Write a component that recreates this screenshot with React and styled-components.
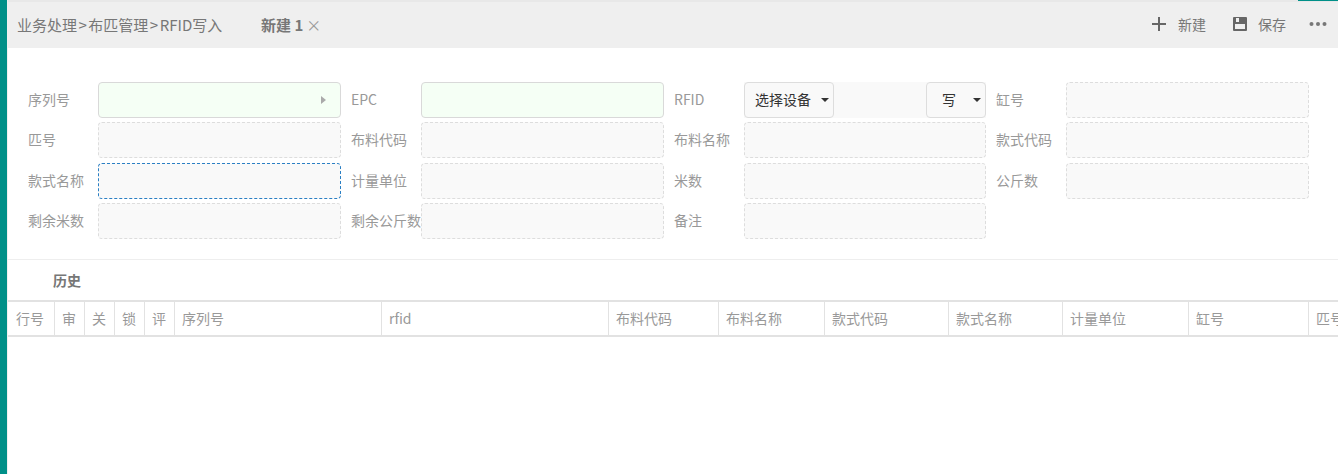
import React from "react";
import styled, { createGlobalStyle } from "styled-components";

const GlobalStyle = createGlobalStyle`
  html, body { margin: 0; padding: 0; height: 100%; background: #fff; overflow: hidden; }
  body { font-family: "Noto Sans CJK SC", "Liberation Sans", sans-serif; font-size: 14px; }
  * { box-sizing: border-box; }
`;

const Page = styled.div`
  display: flex;
  width: 1338px;
  height: 474px;
  overflow: hidden;
`;

const Sidebar = styled.div`
  flex: 0 0 7px;
  background: #009088;
`;

const Main = styled.div`
  flex: 1;
  min-width: 0;
  border-left: 1px solid #f0f0f0;
`;

const TopLine = styled.div`
  display: flex;
  justify-content: flex-end;
  height: 2px;
  background: #e8e8e8;
`;

const TopAccent = styled.div`
  width: 40px;
  height: 1px;
  background: #009088;
`;

const Header = styled.div`
  display: flex;
  align-items: center;
  height: 46px;
  padding: 0 11px 2px 9px;
  background: #efefef;
  color: #777;
`;

const Crumbs = styled.div`
  font-size: 15px;
  width: 244px;
  white-space: nowrap;
`;

const Sep = styled.span`
  padding: 0 1.5px;
`;

const Tab = styled.div`
  font-weight: 700;
  font-size: 15px;
  color: #777;
`;

const TabClose = styled.span`
  margin-left: 3px;
  font-weight: 400;
  font-size: 15px;
  color: #999;
`;

const Actions = styled.div`
  display: flex;
  align-items: center;
  margin-left: auto;
  font-size: 14px;
`;

const Action = styled.div`
  display: flex;
  align-items: center;
  gap: ${(p) => p.$iconGap}px;
  margin-right: ${(p) => p.$gap}px;
`;

const Form = styled.div`
  display: grid;
  grid-template-columns: 70px 243px 80px 243px 80px 242px 80px 243px;
  row-gap: 4.33px;
  grid-auto-rows: 36px;
  padding: 34px 0 20px 20px;
  border-bottom: 1px solid #eee;
`;

const Label = styled.div`
  display: flex;
  align-items: center;
  padding-left: ${(p) => (p.$first ? 0 : 10)}px;
  padding-bottom: 2px;
  font-size: 14px;
  white-space: nowrap;
  color: #999;
`;

const Field = styled.div`
  display: flex;
  align-items: center;
  justify-content: flex-end;
  height: 36px;
  padding-right: 14px;
  border: 1px ${(p) => (p.$required ? "solid #d9d9d9" : p.$focus ? "dashed #2a7fc4" : "dashed #ddd")};
  border-radius: 4px;
  background: ${(p) => (p.$required ? "#f5fff5" : "#f9f9f9")};
`;

const Arrow = styled.span`
  width: 0;
  height: 0;
  border-left: 5px solid #aaa;
  border-top: 4px solid transparent;
  border-bottom: 4px solid transparent;
`;

const RfidGroup = styled.div`
  display: flex;
  justify-content: space-between;
  height: 36px;
  background: #f9f9f9;
`;

const Select = styled.div`
  display: flex;
  align-items: center;
  justify-content: space-between;
  width: ${(p) => p.$w}px;
  padding: 0 4px 2px ${(p) => p.$pad}px;
  border: 1px solid #ddd;
  border-radius: 4px;
  background: #f9f9f9;
  color: #333;
  font-size: 14px;
`;

const Caret = styled.span`
  width: 0;
  height: 0;
  margin-top: 2px;
  border-top: 4px solid #333;
  border-left: 4.5px solid transparent;
  border-right: 4.5px solid transparent;
`;

const Section = styled.div`
  display: flex;
  align-items: center;
  height: 40px;
  padding-left: 45px;
  padding-bottom: 0;
  font-weight: 700;
  font-size: 14px;
  color: #777;
`;

const TableHead = styled.div`
  display: flex;
  height: 37px;
  border-top: 2px solid #e2e2e2;
  border-bottom: 2px solid #e2e2e2;
  overflow: hidden;
`;

const Cell = styled.div`
  flex: 0 0 ${(p) => p.$w}px;
  display: flex;
  align-items: center;
  padding: 0 0 1px 7px;
  border-right: 1px solid #e2e2e2;
  color: #999;
  font-size: 14px;
  white-space: nowrap;
  &:first-child { padding-left: 8px; }
  &:last-child { border-right: 0; }
`;

const rows = [
  [["序列号", "req-arrow"], ["EPC", "req"], ["RFID", "rfid"], ["缸号", ""]],
  [["匹号", ""], ["布料代码", ""], ["布料名称", ""], ["款式代码", ""]],
  [["款式名称", "focus"], ["计量单位", ""], ["米数", ""], ["公斤数", ""]],
  [["剩余米数", ""], ["剩余公斤数", ""], ["备注", ""]],
];

const columns = [
  ["行号", 47], ["审", 30], ["关", 30], ["锁", 30], ["评", 30], ["序列号", 207], ["rfid", 227],
  ["布料代码", 110], ["布料名称", 106], ["款式代码", 124], ["款式名称", 114], ["计量单位", 126],
  ["缸号", 120], ["匹号", 60],
];

function FormItem({ label, kind, first }) {
  return (
    <>
      <Label $first={first}>{label}</Label>
      {kind === "rfid" ? (
        <RfidGroup>
          <Select $w={90} $pad={10}>选择设备<Caret /></Select>
          <Select $w={60} $pad={15}>写<Caret /></Select>
        </RfidGroup>
      ) : (
        <Field $required={kind.startsWith("req")} $focus={kind === "focus"}>
          {kind === "req-arrow" && <Arrow />}
        </Field>
      )}
    </>
  );
}

export default function App() {
  return (
    <Page>
      <GlobalStyle />
      <Sidebar />
      <Main>
        <TopLine><TopAccent /></TopLine>
        <Header>
          <Crumbs>业务处理<Sep>&gt;</Sep>布匹管理<Sep>&gt;</Sep>RFID写入</Crumbs>
          <Tab>新建 1<TabClose>×</TabClose></Tab>
          <Actions>
            <Action $gap={27} $iconGap={11}>
              <svg width="16" height="16" viewBox="0 0 16 16"><path d="M8 1v14M1 8h14" stroke="#666" strokeWidth="2" /></svg>
              新建
            </Action>
            <Action $gap={23} $iconGap={11}>
              <svg width="14" height="14" viewBox="0 0 14 14">
                <path d="M0 1a1 1 0 0 1 1-1h12a1 1 0 0 1 1 1v12a1 1 0 0 1-1 1H1a1 1 0 0 1-1-1z" fill="#666" />
                <path d="M3 1h3v4H3zM2 7h10v5H2z" fill="#efefef" />
              </svg>
              保存
            </Action>
            <svg width="18" height="6" viewBox="0 0 18 6">
              <circle cx="2.5" cy="3" r="2" fill="#777" /><circle cx="9" cy="3" r="2" fill="#777" /><circle cx="15.5" cy="3" r="2" fill="#777" />
            </svg>
          </Actions>
        </Header>
        <Form>
          {rows.map((row) =>
            row.map(([label, kind], i) => <FormItem key={label} label={label} kind={kind} first={i === 0} />)
          )}
        </Form>
        <Section>历史</Section>
        <TableHead>
          {columns.map(([name, w]) => <Cell key={name} $w={w}>{name}</Cell>)}
        </TableHead>
      </Main>
    </Page>
  );
}
